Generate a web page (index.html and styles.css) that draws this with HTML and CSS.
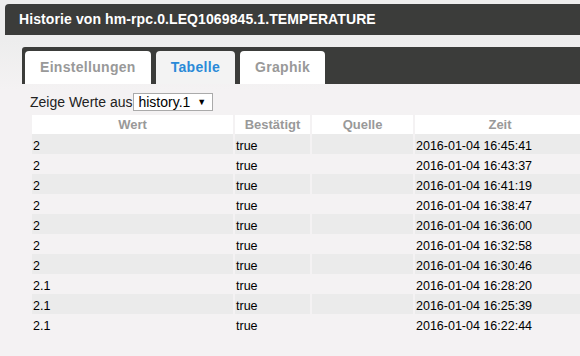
FILE: index.html
```html
<!DOCTYPE html>
<html lang="de">

<head>
    <meta charset="UTF-8">
    <meta name="viewport" content="width=device-width, initial-scale=1.0">
    <link rel="stylesheet" href="styles.css">
</head>

<body>
    <div class="dialog">
        <div class="titlebar">Historie von hm-rpc.0.LEQ1069845.1.TEMPERATURE</div>

        <div class="tabs">
            <div class="tab">Einstellungen</div>
            <div class="tab active">Tabelle</div>
            <div class="tab">Graphik</div>
        </div>

        <div class="panel">
            <div class="source">
                <span>Zeige Werte aus</span>
                <span class="select">history.1 <span class="arrow">&#9660;</span></span>
            </div>

            <table class="values">
                <thead>
                    <tr>
                        <th class="col-val">Wert</th>
                        <th class="col-ack">Bestätigt</th>
                        <th class="col-from">Quelle</th>
                        <th class="col-ts">Zeit</th>
                    </tr>
                </thead>
                <tbody>
                    <tr><td>2</td><td>true</td><td></td><td>2016-01-04 16:45:41</td></tr>
                    <tr><td>2</td><td>true</td><td></td><td>2016-01-04 16:43:37</td></tr>
                    <tr><td>2</td><td>true</td><td></td><td>2016-01-04 16:41:19</td></tr>
                    <tr><td>2</td><td>true</td><td></td><td>2016-01-04 16:38:47</td></tr>
                    <tr><td>2</td><td>true</td><td></td><td>2016-01-04 16:36:00</td></tr>
                    <tr><td>2</td><td>true</td><td></td><td>2016-01-04 16:32:58</td></tr>
                    <tr><td>2</td><td>true</td><td></td><td>2016-01-04 16:30:46</td></tr>
                    <tr><td>2.1</td><td>true</td><td></td><td>2016-01-04 16:28:20</td></tr>
                    <tr><td>2.1</td><td>true</td><td></td><td>2016-01-04 16:25:39</td></tr>
                    <tr><td>2.1</td><td>true</td><td></td><td>2016-01-04 16:22:44</td></tr>
                </tbody>
            </table>
        </div>
    </div>
</body>
</html>
```

FILE: styles.css
```css
html, body {
    margin: 0;
    padding: 0;
    overflow: hidden;
}
body {
    width: 580px;
    height: 356px;
    background: #ededed;
    font-family: 'Liberation Sans', Arial, sans-serif;
}
.dialog {
    padding: 4px 0 0 5px;
    width: 640px;
    height: 352px;
    background: linear-gradient(#ededed 0, #ededed 40px, #f4f2f3 90px, #f4f2f3 100%);
}
.titlebar {
    height: 31px;
    line-height: 31px;
    padding-left: 14px;
    background: #3b3c3a;
    border-top-left-radius: 4px;
    color: #fff;
    font-size: 14px;
    font-weight: bold;
    letter-spacing: 0.1px;
}
.tabs {
    display: flex;
    align-items: flex-end;
    gap: 5px;
    height: 37px;
    margin: 12px 0 0 17px;
    padding-left: 3px;
    background: #3b3c3a;
    border-top-left-radius: 3px;
    box-sizing: border-box;
}
.tab {
    height: 33px;
    line-height: 33px;
    padding: 0 15px;
    background: #fff;
    border-radius: 4px 4px 0 0;
    color: #999;
    font-size: 14px;
    font-weight: bold;
    letter-spacing: 0.3px;
}
.tab.active {
    background: #f3f3f3;
    color: #2a8ad8;
}
.panel {
    padding: 9px 0 0 25px;
}
.source {
    display: flex;
    align-items: center;
    height: 18px;
    font-size: 14px;
    color: #222;
}
.select {
    display: inline-flex;
    align-items: center;
    height: 16px;
    margin-left: 1px;
    padding: 0 4px;
    width: 70px;
    background: #fff;
    border: 1px solid #aaa;
    color: #000;
}
.arrow {
    margin-left: 7px;
    font-size: 9px;
}
.values {
    margin-top: 4px;
    border-collapse: separate;
    border-spacing: 2px 0;
    font-size: 12.5px;
    color: #000;
}
.values th {
    height: 19px;
    padding: 0;
    background: #fff;
    color: #999;
    font-size: 13px;
    font-weight: bold;
    text-align: center;
}
.values td {
    height: 17px;
    padding: 3px 0 0 1px;
}
.values tbody tr:nth-child(odd) td {
    background: #ebebeb;
}
.col-val { width: 201px; }
.col-ack { width: 75px; }
.col-from { width: 101px; }
.col-ts { width: 170px; }
```
